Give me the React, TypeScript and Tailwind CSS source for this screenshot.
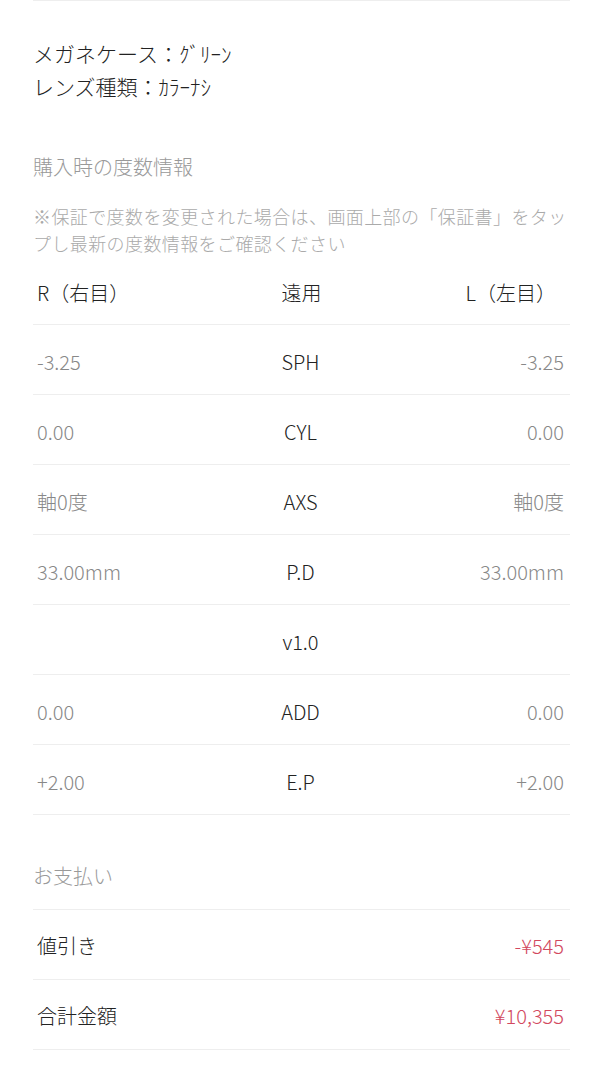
const font = {
  fontFamily: '"Noto Sans CJK JP", "Noto Sans", sans-serif',
};

const rows = [
  { r: "-3.25", label: "SPH", l: "-3.25" },
  { r: "0.00", label: "CYL", l: "0.00" },
  { r: "軸0度", label: "AXS", l: "軸0度" },
  { r: "33.00mm", label: "P.D", l: "33.00mm" },
  { r: "", label: "v1.0", l: "" },
  { r: "0.00", label: "ADD", l: "0.00" },
  { r: "+2.00", label: "E.P", l: "+2.00" },
];

const payments = [
  { label: "値引き", value: "-¥545" },
  { label: "合計金額", value: "¥10,355" },
];

export default function App() {
  return (
    <div className="w-full min-h-screen bg-white font-light" style={font}>
      <div className="mx-[33px]">
        <div className="h-px bg-[#eeeeee]" />

        {/* options */}
        <div className="pt-[36px] text-[21px] leading-[33px] text-[#222]">
          <p>メガネケース：ｸﾞﾘｰﾝ</p>
          <p>レンズ種類：ｶﾗｰﾅｼ</p>
        </div>

        {/* prescription */}
        <h2 className="mt-[47px] text-[20px] leading-[33px] text-[#999]">
          購入時の度数情報
        </h2>
        <p className="mt-[20px] text-[18px] tracking-[0.4px] leading-[27px] text-[#aaa]">
          ※保証で度数を変更された場合は、画面上部の「保証書」をタップし最新の度数情報をご確認ください
        </p>

        <div className="grid grid-cols-3 items-center pl-[4px] pr-[14px] pt-[19px] pb-[15px] border-b border-[#eeeeee] text-[20px] leading-[33px] text-[#222]">
          <span>R（右目）</span>
          <span className="text-center pl-[10px]">遠用</span>
          <span className="text-right">L（左目）</span>
        </div>

        {rows.map((row) => (
          <div
            key={row.label}
            className="grid grid-cols-3 items-center h-[70px] pt-[4px] pl-[4px] pr-[6px] border-b border-[#eeeeee] text-[20px]"
          >
            <span className="text-[#888]">{row.r}</span>
            <span className="text-center text-[#222]">{row.label}</span>
            <span className="text-right text-[#888]">{row.l}</span>
          </div>
        ))}

        {/* payment */}
        <h2 className="pt-[44px] pb-[17px] border-b border-[#eeeeee] text-[20px] leading-[33px] text-[#999]">
          お支払い
        </h2>
        {payments.map((p) => (
          <div
            key={p.label}
            className="flex items-center justify-between h-[70px] pt-[3px] pl-[4px] pr-[6px] border-b border-[#eeeeee] text-[20px]"
          >
            <span className="text-[#222]">{p.label}</span>
            <span className="text-[#d2485e]">{p.value}</span>
          </div>
        ))}
      </div>
    </div>
  );
}
